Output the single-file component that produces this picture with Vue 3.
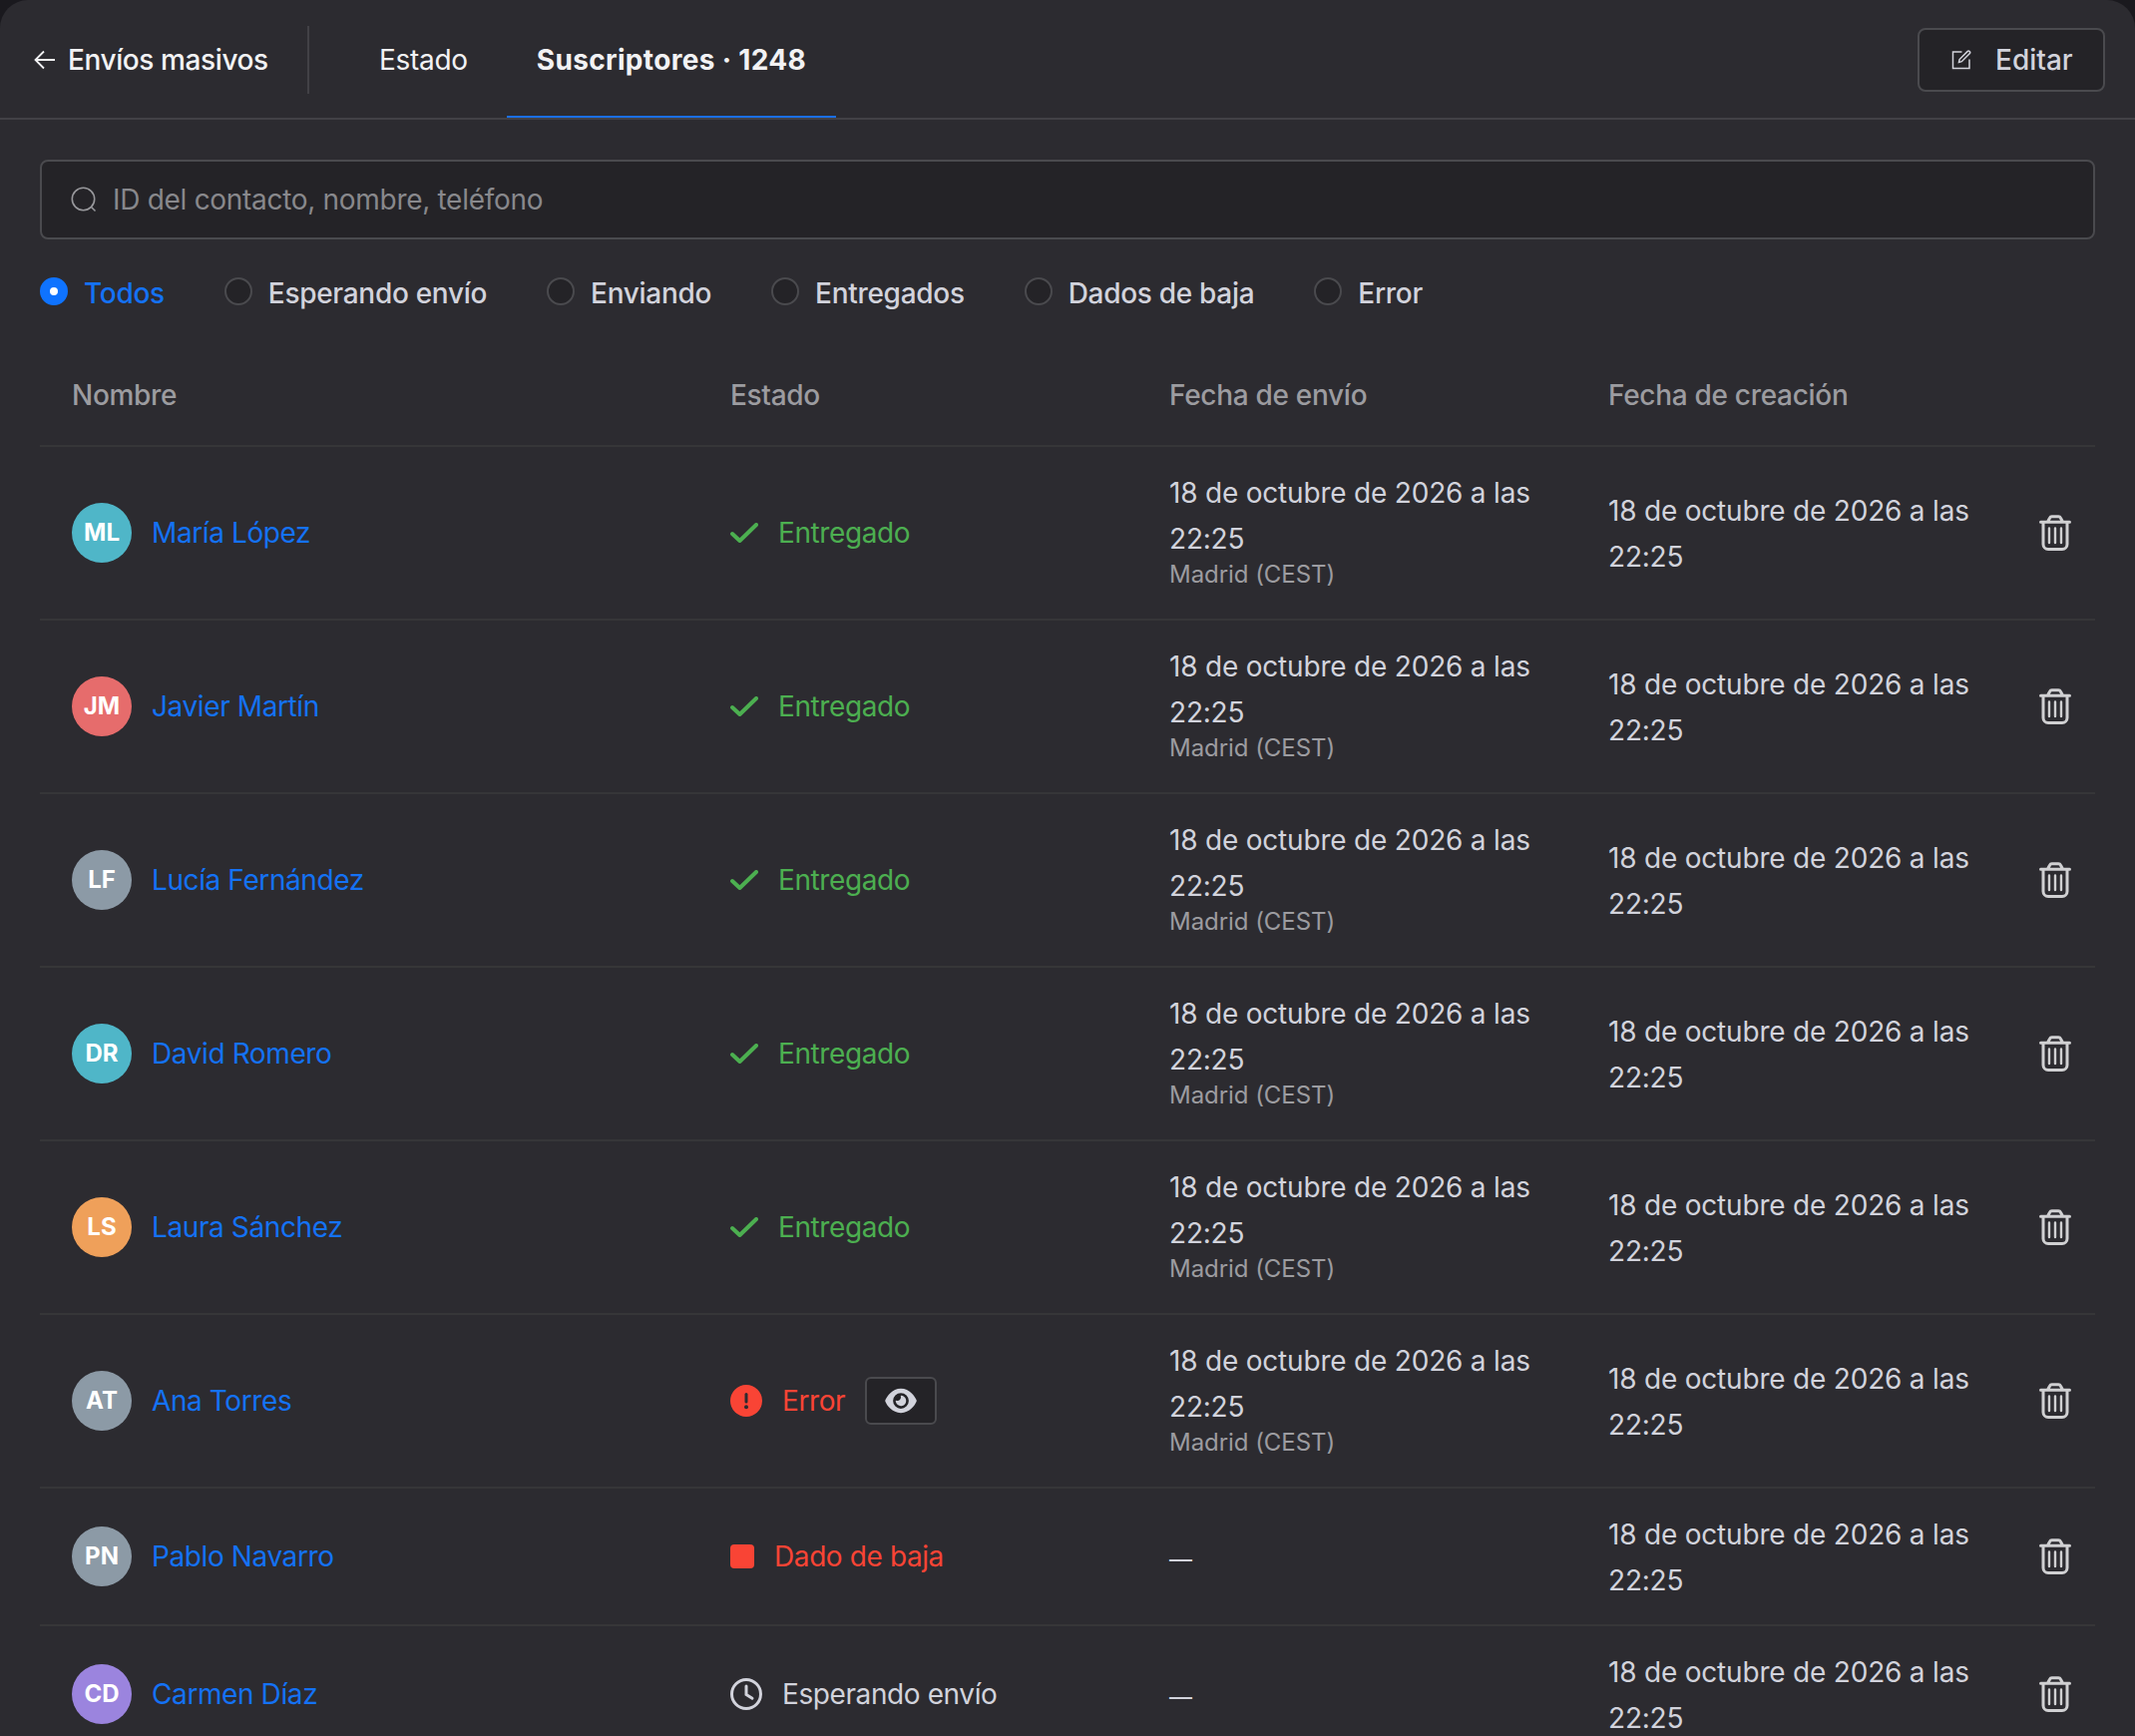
<script setup>
import { ref } from 'vue'

const search = ref('')
const selectedFilter = ref('Todos')

const filters = ['Todos', 'Esperando envío', 'Enviando', 'Entregados', 'Dados de baja', 'Error']

const fecha = '18 de octubre de 2026 a las 22:25'

const suscriptores = [
  { iniciales: 'ML', nombre: 'María López', color: 'teal', estado: 'entregado', envio: fecha },
  { iniciales: 'JM', nombre: 'Javier Martín', color: 'red', estado: 'entregado', envio: fecha },
  { iniciales: 'LF', nombre: 'Lucía Fernández', color: 'gray', estado: 'entregado', envio: fecha },
  { iniciales: 'DR', nombre: 'David Romero', color: 'teal', estado: 'entregado', envio: fecha },
  { iniciales: 'LS', nombre: 'Laura Sánchez', color: 'orange', estado: 'entregado', envio: fecha },
  { iniciales: 'AT', nombre: 'Ana Torres', color: 'gray', estado: 'error', envio: fecha },
  { iniciales: 'PN', nombre: 'Pablo Navarro', color: 'gray', estado: 'baja', envio: null },
  { iniciales: 'CD', nombre: 'Carmen Díaz', color: 'purple', estado: 'esperando', envio: null }
]

const estados = {
  entregado: 'Entregado',
  error: 'Error',
  baja: 'Dado de baja',
  esperando: 'Esperando envío'
}
</script>

<template>
  <div class="panel">
    <header class="topbar">
      <a class="back">
        <svg class="back-icon" viewBox="0 0 22 20">
          <path d="M21 10H1.5M10 1.5L1.5 10l8.500 8.500" />
        </svg>
        <span>Envíos masivos</span>
      </a>
      <div class="divider"></div>
      <nav class="tabs">
        <button class="tab">Estado</button>
        <button class="tab active">Suscriptores · 1248</button>
      </nav>
      <button class="edit">
        <svg class="edit-icon" viewBox="0 0 20 20">
          <path d="M10.500 2H1.500v16.500h16.500V9.500" />
          <path d="M7.500 12.500l.6-3L16 1.600a1.500 1.500 0 0 1 2.200 2.200l-7.900 7.900z" />
        </svg>
        <span>Editar</span>
      </button>
    </header>

    <main class="content">
      <label class="search">
        <svg class="search-icon" viewBox="0 0 26 26">
          <circle cx="12.500" cy="12.500" r="11.200" />
          <path d="M20.500 20.500l4 4" />
        </svg>
        <input v-model="search" type="text" placeholder="ID del contacto, nombre, teléfono" />
      </label>

      <div class="filters">
        <div
          v-for="filter in filters"
          :key="filter"
          class="filter"
          :class="{ active: selectedFilter === filter }"
          @click="selectedFilter = filter"
        >
          <span class="radio"></span>
          <span>{{ filter }}</span>
        </div>
      </div>

      <div class="row head">
        <div>Nombre</div>
        <div>Estado</div>
        <div>Fecha de envío</div>
        <div>Fecha de creación</div>
      </div>

      <div v-for="item in suscriptores" :key="item.nombre" class="row">
        <div class="contact">
          <span class="avatar" :class="item.color">{{ item.iniciales }}</span>
          <a class="name">{{ item.nombre }}</a>
        </div>

        <div class="status" :class="item.estado">
          <svg v-if="item.estado === 'entregado'" class="check" viewBox="0 0 28 20">
            <path d="M2 11l7.500 7L26 2" />
          </svg>
          <svg v-else-if="item.estado === 'error'" class="status-icon" viewBox="0 0 32 32">
            <circle cx="16" cy="16" r="16" fill="currentColor" />
            <path d="M16 9.500v7.500" stroke="#2c2b30" stroke-width="3" stroke-linecap="round" />
            <circle cx="16" cy="22.200" r="2" fill="#2c2b30" />
          </svg>
          <span v-else-if="item.estado === 'baja'" class="square"></span>
          <svg v-else class="status-icon clock" viewBox="0 0 32 32">
            <circle cx="16" cy="16" r="14.500" />
            <path d="M16 8v8.500l6 3.800" />
          </svg>
          <span>{{ estados[item.estado] }}</span>
          <button v-if="item.estado === 'error'" class="view">
            <svg class="eye" viewBox="0 0 576 512">
              <path
                d="M288 32c-80.800 0-145.500 36.800-192.600 80.600C48.600 156 17.300 208 2.500 243.700c-3.300 7.900-3.300 16.700 0 24.600C17.300 304 48.600 356 95.400 399.400C142.500 443.200 207.200 480 288 480s145.500-36.800 192.600-80.600c46.800-43.500 78.100-95.400 93-131.100c3.300-7.900 3.300-16.700 0-24.600c-14.900-35.700-46.200-87.700-93-131.100C433.500 68.800 368.800 32 288 32zM144 256a144 144 0 1 1 288 0 144 144 0 1 1-288 0zm144-64c0 35.300-28.700 64-64 64c-7.100 0-13.900-1.200-20.300-3.300c-5.500-1.800-11.900 1.600-11.700 7.400c.3 6.900 1.300 13.800 3.200 20.700c13.700 51.200 66.400 81.600 117.600 67.900s81.600-66.400 67.900-117.600c-11.100-41.500-47.800-69.400-88.600-71.100c-5.800-.2-9.200 6.100-7.400 11.700c2.100 6.400 3.300 13.200 3.300 20.300z"
              />
            </svg>
          </button>
        </div>

        <div v-if="item.envio" class="date">
          {{ item.envio }}
          <small>Madrid (CEST)</small>
        </div>
        <div v-else class="dash">—</div>

        <div class="date">{{ fecha }}</div>

        <button class="trash">
          <svg class="trash-icon" viewBox="0 0 32 36">
            <path d="M1.500 7.200h29M4 7.500v22a5 5 0 0 0 5 5h14a5 5 0 0 0 5-5v-22M8.500 7l2-3.800a2.500 2.500 0 0 1 2.200-1.400h6.600a2.500 2.500 0 0 1 2.200 1.400l2 3.800" />
            <path class="bars" d="M10 13.500v14.500M16 13.500v14.500M22 13.500v14.500" />
          </svg>
        </button>
      </div>
    </main>
  </div>
</template>

<style>
body {
  background: #1a191e;
}
</style>

<style scoped>
.panel {
  height: 1740px;
  overflow: hidden;
  box-sizing: border-box;
  border-radius: 28px 28px 0 0;
  background: #2c2b30;
  color: #d2d3dc;
  font-family: Inter, "Liberation Sans", sans-serif;
  font-size: 28px;
  line-height: 46px;
  letter-spacing: -0.3px;
}

button {
  margin: 0;
  padding: 0;
  border: none;
  background: none;
  color: inherit;
  font: inherit;
  letter-spacing: inherit;
  cursor: pointer;
}

svg {
  display: block;
  flex-shrink: 0;
  fill: none;
}

.topbar {
  display: flex;
  align-items: center;
  height: 118px;
  padding: 0 30px 0 34px;
  border-bottom: 2px solid #424146;
  color: #f2f2f4;
}

.back {
  display: flex;
  align-items: center;
  gap: 12px;
  width: 274px;
  padding-top: 2px;
  font-weight: 500;
  letter-spacing: -0.4px;
  white-space: nowrap;
}

.back-icon {
  width: 22px;
  height: 20px;
  stroke: currentColor;
  stroke-width: 1.8;
}

.divider {
  width: 2px;
  height: 68px;
  margin-top: 2px;
  margin-right: 40px;
  background: #424146;
}

.tabs {
  display: flex;
  gap: 9px;
  align-self: stretch;
  margin-right: auto;
}

.tab {
  padding: 4px 30px 0;
  border-bottom: 2px solid transparent;
}

.tab.active {
  border-color: #1b6fe8;
  font-weight: 700;
  letter-spacing: 0.33px;
}

.edit {
  display: flex;
  align-items: center;
  gap: 24px;
  box-sizing: border-box;
  width: 188px;
  height: 64px;
  margin-top: 2px;
  padding-left: 32px;
  border: 2px solid #4a4a4e;
  border-radius: 8px;
  background: #242327;
  color: #d2d3dc;
  font-weight: 500;
  letter-spacing: 0;
}

.edit-icon {
  width: 20px;
  height: 20px;
  stroke: currentColor;
  stroke-width: 1.5;
}

.content {
  padding: 40px 40px 0;
}

.search {
  display: flex;
  align-items: center;
  gap: 16px;
  box-sizing: border-box;
  height: 80px;
  padding: 0 29px;
  border: 2px solid #4a4a4e;
  border-radius: 8px;
  background: #242327;
}

.search-icon {
  width: 26px;
  height: 26px;
  stroke: #97979b;
  stroke-width: 1.6;
}

.search input {
  flex: 1;
  padding: 0;
  border: none;
  outline: none;
  background: none;
  color: #d2d3dc;
  font: inherit;
  letter-spacing: inherit;
}

.search input::placeholder {
  color: #88888c;
  opacity: 1;
}

.filters {
  display: flex;
  gap: 60px;
  height: 75px;
  padding-top: 31px;
  font-weight: 500;
}

.filter {
  display: flex;
  gap: 16px;
  height: 46px;
  cursor: pointer;
}

.filter.active {
  color: #1472f5;
}

.radio {
  box-sizing: border-box;
  width: 28px;
  height: 28px;
  margin-top: 7px;
  border: 2px solid #4a4a4e;
  border-radius: 50%;
  background: #242327;
}

.filter.active .radio {
  border: 10px solid #0f73ff;
  background: #fff;
}

.row {
  display: grid;
  grid-template-columns: 660px 440px 440px 440px 80px;
  align-items: center;
  border-bottom: 2px solid #363638;
}

.row > div {
  padding: 0 32px;
}

.head {
  height: 100px;
  color: #9c9ca0;
  font-weight: 500;
}

.contact,
.status {
  display: flex;
  align-items: center;
  gap: 20px;
  letter-spacing: -0.4px;
}

.avatar {
  width: 60px;
  height: 60px;
  border-radius: 50%;
  color: #fff;
  font-size: 24px;
  font-weight: 700;
  line-height: 60px;
  letter-spacing: 0;
  text-align: center;
}

.avatar.teal { background: #4fb6c8; }
.avatar.red { background: #e66c6c; }
.avatar.gray { background: #8c9aa6; }
.avatar.orange { background: #efa05a; }
.avatar.purple { background: #9b84de; }

.name {
  color: #1472f5;
}

.entregado {
  color: #4caf50;
}

.error,
.baja {
  color: #f94435;
}

.check {
  width: 28px;
  height: 20px;
  stroke: currentColor;
  stroke-width: 4;
  stroke-linecap: round;
  stroke-linejoin: round;
}

.status-icon {
  width: 32px;
  height: 32px;
}

.clock {
  stroke: currentColor;
  stroke-width: 3;
  stroke-linecap: round;
}

.square {
  width: 24px;
  height: 24px;
  border-radius: 4px;
  background: #f94435;
}

.view {
  display: grid;
  place-items: center;
  box-sizing: border-box;
  width: 72px;
  height: 48px;
  border: 2px solid #4a4a4e;
  border-radius: 6px;
  background: #242327;
  color: #d2d3dc;
}

.eye {
  width: 32px;
  height: 28px;
  fill: currentColor;
}

.row > .date {
  padding-top: 23px;
  padding-bottom: 21px;
  letter-spacing: -0.2px;
}

.date small {
  display: block;
  height: 37px;
  margin-top: -1px;
  color: #9c9ca0;
  font-size: 24px;
  line-height: 28px;
  letter-spacing: -0.05px;
}

.row > .dash {
  padding-top: 5px;
  font-size: 23px;
}

.trash {
  display: grid;
  place-items: center;
}

.trash-icon {
  width: 32px;
  height: 36px;
  stroke: #d0d0d2;
  stroke-width: 3;
  stroke-linecap: round;
}

.bars {
  stroke-width: 2.4;
}
</style>
